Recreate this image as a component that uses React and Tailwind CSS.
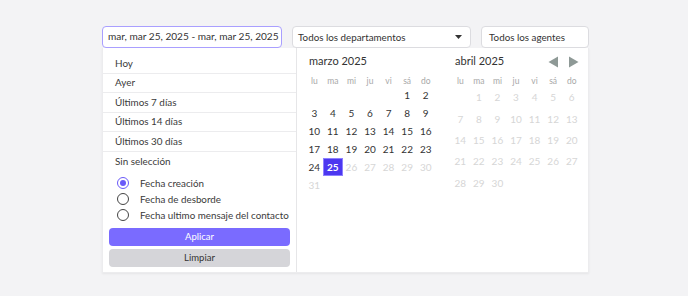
import React from 'react';

const presets = ['Hoy', 'Ayer', 'Últimos 7 días', 'Últimos 14 días', 'Últimos 30 días'];
const radios = [
  { label: 'Fecha creación', checked: true },
  { label: 'Fecha de desborde', checked: false },
  { label: 'Fecha ultimo mensaje del contacto', checked: false },
];
const weekdays = ['lu', 'ma', 'mi', 'ju', 'vi', 'sá', 'do'];

// offset = empty cells before day 1 (monday first)
const buildWeeks = (offset, days) => {
  const cells = [];
  for (let i = 0; i < offset; i++) cells.push(null);
  for (let d = 1; d <= days; d++) cells.push(d);
  while (cells.length % 7) cells.push(null);
  const weeks = [];
  for (let i = 0; i < cells.length; i += 7) weeks.push(cells.slice(i, i + 7));
  return weeks;
};

const Month = ({ title, offset, days, selected, lastEnabled, nav }) => {
  const weeks = buildWeeks(offset, days);
  return (
    <div className="w-[130px] flex flex-col">
      <div className="flex items-center justify-between h-[27px] pl-[4px] pr-[2px]">
        <span className="text-[11px] text-[#333]">{title}</span>
        {nav && (
          <div className="flex items-center gap-[9px]">
            <svg width="11" height="12" viewBox="0 0 11 12"><path d="M10 0.5 L10 11.5 L0.5 6 Z" fill="#8e9996" /></svg>
            <svg width="11" height="12" viewBox="0 0 11 12"><path d="M1 0.5 L1 11.5 L10.5 6 Z" fill="#8e9996" /></svg>
          </div>
        )}
      </div>
      <div className="grid grid-cols-7 h-[12px] items-center">
        {weekdays.map(w => (
          <span key={w} className="text-center text-[8.5px] text-[#a8a8a8]">{w}</span>
        ))}
      </div>
      <div className="flex flex-col h-[107px]">
        {weeks.map((wk, i) => (
          <div key={i} className="grid grid-cols-7 flex-1 items-stretch">
            {wk.map((d, j) => {
              if (!d) return <span key={j} />;
              const isSel = d === selected;
              const enabled = d <= lastEnabled;
              return (
                <span
                  key={j}
                  className={`flex items-center justify-center text-[10px] ${
                    isSel
                      ? 'bg-[#4c37f0] text-white font-bold -mx-[1px] border border-[#8d80ff]'
                      : enabled
                      ? 'text-[#333]'
                      : 'text-[#d6d6d6]'
                  }`}
                >
                  {d}
                </span>
              );
            })}
          </div>
        ))}
      </div>
    </div>
  );
};

export default function App() {
  return (
    <div
      className="w-[688px] h-[296px] bg-[#f3f3f5] pt-[26px] pl-[102px]"
      style={{ fontFamily: 'Lato, "Noto Sans", sans-serif' }}
    >
      <div className="flex gap-[10px] h-[22px] whitespace-nowrap">
        <div className="w-[180px] rounded-[4px] border border-[#a99fff] bg-white flex items-center px-[5px] text-[10.1px] text-[#333]">
          mar, mar 25, 2025 - mar, mar 25, 2025
        </div>
        <div className="w-[179px] rounded-[4px] border border-[#dcdce0] bg-white flex items-center justify-between pl-[5px] pr-[8px] text-[9.8px] text-[#333]">
          <span>Todos los departamentos</span>
          <svg width="7" height="4" viewBox="0 0 7 4"><path d="M0 0 L7 0 L3.5 4 Z" fill="#333" /></svg>
        </div>
        <div className="w-[108px] rounded-[4px] border border-[#dcdce0] bg-white flex items-center px-[7px] text-[9.8px] text-[#333]">
          Todos los agentes
        </div>
      </div>

      <div className="w-[487px] h-[225px] bg-white flex shadow-[0_1px_2px_rgba(0,0,0,0.06)] border border-[#ececee] border-t-0 whitespace-nowrap">
        <div className="w-[194px] border-r border-[#e6e6e8] flex flex-col pt-[6px]">
          {presets.map(p => (
            <div key={p} className="h-[19.5px] flex items-center pl-[12px] border-b border-[#ececee] text-[9.9px] text-[#3a3a3a]">
              {p}
            </div>
          ))}
          <div className="h-[19.5px] flex items-center pl-[12px] text-[9.9px] text-[#3a3a3a]">Sin selección</div>
          <div className="flex flex-col pl-[14px] pt-[6px] gap-[4px]">
            {radios.map(r => (
              <div key={r.label} className="h-[12px] flex items-center gap-[11px]">
                {r.checked ? (
                  <span className="w-[12px] h-[12px] rounded-full border-[1.5px] border-[#6a5af9] flex items-center justify-center">
                    <span className="w-[6px] h-[6px] rounded-full bg-[#6a5af9]" />
                  </span>
                ) : (
                  <span className="w-[12px] h-[12px] rounded-full border-[1.5px] border-[#444]" />
                )}
                <span className="text-[9.8px] text-[#3a3a3a]">{r.label}</span>
              </div>
            ))}
          </div>
          <div className="flex flex-col gap-[3px] px-[6px] pt-[7px]">
            <button className="h-[18px] rounded-[4px] bg-[#7a6bff] text-white text-[9.5px]">Aplicar</button>
            <button className="h-[18px] rounded-[4px] bg-[#d5d5d9] text-[#333] text-[9.5px]">Limpiar</button>
          </div>
        </div>
        <div className="flex gap-[16px] pl-[8px]">
          <Month title="marzo 2025" offset={5} days={31} selected={25} lastEnabled={25} />
          <Month title="abril 2025" offset={1} days={30} selected={null} lastEnabled={0} nav />
        </div>
      </div>
    </div>
  );
}
